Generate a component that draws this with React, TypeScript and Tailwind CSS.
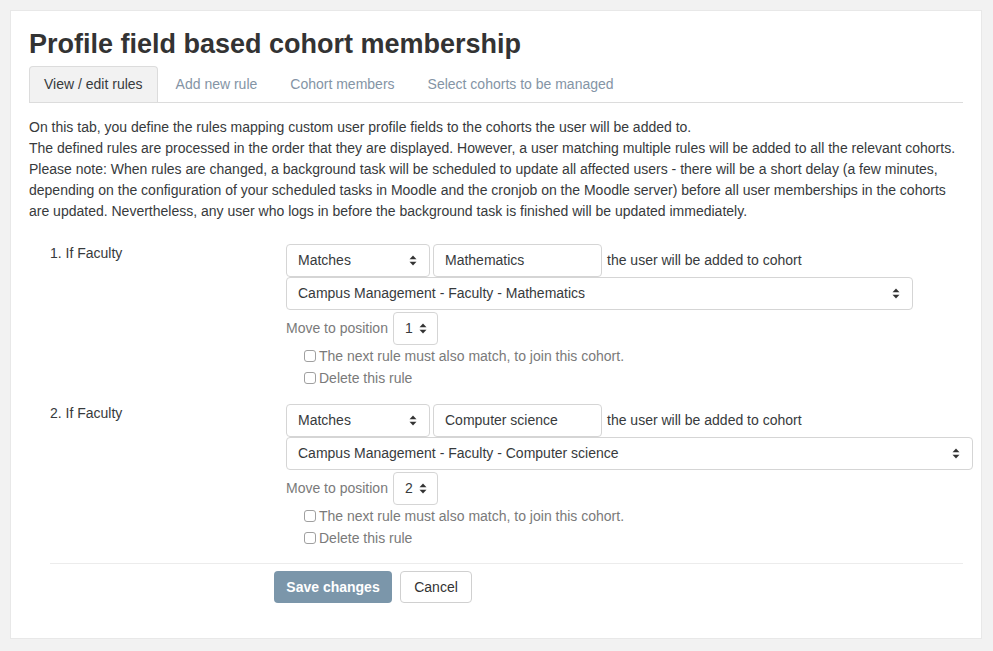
const rules = [
  {
    n: 1,
    field: "Mathematics",
    cohort: "Campus Management - Faculty - Mathematics",
    cohortWidth: 627,
  },
  {
    n: 2,
    field: "Computer science",
    cohort: "Campus Management - Faculty - Computer science",
    cohortWidth: 687,
  },
];

const tabs = ["View / edit rules", "Add new rule", "Cohort members", "Select cohorts to be managed"];

function Caret() {
  return (
    <svg width="8" height="11" viewBox="0 0 8 11" className="shrink-0">
      <path d="M4 0.5 L7.5 4.3 L0.5 4.3 Z" fill="#333" />
      <path d="M4 10.5 L7.5 6.7 L0.5 6.7 Z" fill="#333" />
    </svg>
  );
}

function FakeSelect({ value, width }: { value: string; width: number }) {
  return (
    <div
      className="h-[33px] flex items-center justify-between pl-[11px] pr-[12px] border border-[#d5d5d5] rounded-[4px] bg-white text-[14px] text-[#373a3c]"
      style={{ width }}
    >
      <span className="whitespace-nowrap overflow-hidden">{value}</span>
      <Caret />
    </div>
  );
}

function Check({ label }: { label: string }) {
  return (
    <div className="h-[22px] flex items-center pl-[18px] gap-[3px] text-[14px] text-[#7a7a7a]">
      <span className="w-[12px] h-[12px] border border-[#a0a0a0] rounded-[3px] bg-white shrink-0" />
      <span>{label}</span>
    </div>
  );
}

export default function App() {
  return (
    <div className="min-h-[651px] bg-[#f2f2f2] pt-[10px] pl-[10px] font-['Liberation_Sans',Arial,sans-serif]">
      <div className="w-[972px] h-[629px] bg-white border border-[#e8e8e8] pl-[18px] pr-[18px] text-[#373a3c]">
        <h2 className="mt-[16px] text-[27px] leading-[34px] font-bold text-[#333]">
          Profile field based cohort membership
        </h2>

        <div className="mt-[5px] flex border-b border-[#dcdcdc]">
          {tabs.map((t, i) => (
            <div
              key={t}
              className={
                i === 0
                  ? "h-[36px] px-[14px] mr-[3px] flex items-center text-[14px] text-[#373a3c] bg-[#f2f2f2] border border-b-0 border-[#dcdcdc] rounded-t-[4px]"
                  : "h-[36px] px-[15px] mr-[3px] flex items-center text-[14px] text-[#8494a5]"
              }
            >
              {t}
            </div>
          ))}
        </div>

        <div className="mt-[14px] text-[14px] leading-[21px] text-[#373a3c]">
          <div>On this tab, you define the rules mapping custom user profile fields to the cohorts the user will be added to.</div>
          <div>The defined rules are processed in the order that they are displayed. However, a user matching multiple rules will be added to all the relevant cohorts.</div>
          <div>Please note: When rules are changed, a background task will be scheduled to update all affected users - there will be a short delay (a few minutes,</div>
          <div>depending on the configuration of your scheduled tasks in Moodle and the cronjob on the Moodle server) before all user memberships in the cohorts</div>
          <div>are updated. Nevertheless, any user who logs in before the background task is finished will be updated immediately.</div>
        </div>

        <div className="mt-[22px] flex flex-col gap-[15px]">
          {rules.map((r) => (
            <div key={r.n} className="flex pl-[21px]">
              <div className="w-[236px] shrink-0 text-[14px] leading-[21px] -mt-[1px]">{r.n}. If Faculty</div>
              <div className="flex flex-col">
                <div className="flex items-center">
                  <FakeSelect value="Matches" width={144} />
                  <div className="ml-[3px] w-[169px] h-[33px] flex items-center pl-[11px] border border-[#d5d5d5] rounded-[4px] text-[14px] text-[#373a3c]">
                    {r.field}
                  </div>
                  <span className="ml-[5px] text-[14px]">the user will be added to cohort</span>
                </div>
                <FakeSelect value={r.cohort} width={r.cohortWidth} />
                <div className="mt-[2px] flex items-center">
                  <span className="text-[14px] text-[#7a7a7a]">Move to position</span>
                  <div className="ml-[5px] w-[45px] h-[33px] flex items-center justify-between pl-[11px] pr-[10px] border border-[#d5d5d5] rounded-[4px] text-[14px]">
                    <span>{r.n}</span>
                    <Caret />
                  </div>
                </div>
                <Check label="The next rule must also match, to join this cohort." />
                <Check label="Delete this rule" />
              </div>
            </div>
          ))}
        </div>

        <div className="mt-[14px] ml-[21px] border-t border-[#ececec]" />

        <div className="mt-[7px] ml-[245px] flex gap-[8px]">
          <button className="w-[118px] h-[32px] rounded-[4px] bg-[#7b96aa] text-white text-[14px] font-bold">
            Save changes
          </button>
          <button className="w-[72px] h-[32px] rounded-[4px] border border-[#d0d0d0] bg-white text-[#333] text-[14px]">
            Cancel
          </button>
        </div>
      </div>
    </div>
  );
}
